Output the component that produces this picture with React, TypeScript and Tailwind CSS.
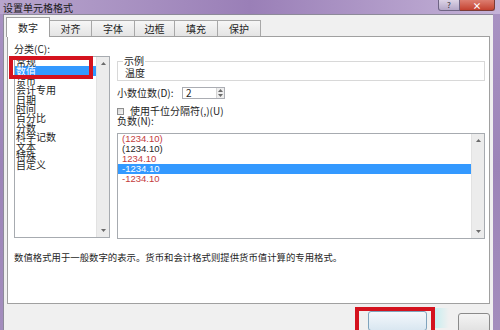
import React from 'react';

const TABS = [
  { label: '数字', w: 'w-[44px]' },
  { label: '对齐', w: 'w-[42px]' },
  { label: '字体', w: 'w-[43px]' },
  { label: '边框', w: 'w-[40px]' },
  { label: '填充', w: 'w-[43px]' },
  { label: '保护', w: 'w-[43px]' },
];

const CATEGORIES = ['常规', '数值', '货币', '会计专用', '日期', '时间', '百分比', '分数', '科学记数', '文本', '特殊', '自定义'];

const NEGATIVES = [
  { text: '(1234.10)', cls: 'text-[#c43c3c]' },
  { text: '(1234.10)', cls: 'text-[#1e1e1e]' },
  { text: '1234.10', cls: 'text-[#c43c3c]' },
  { text: '-1234.10', cls: 'text-white bg-[#3399ff]' },
  { text: '-1234.10', cls: 'text-[#c43c3c]' },
];

const Arrow = ({ down }: { down?: boolean }) => (
  <svg width="5" height="3" viewBox="0 0 5 3">
    <path d={down ? 'M0 0 L5 0 L2.5 3 Z' : 'M0 3 L5 3 L2.5 0 Z'} fill="#6b6b6b" />
  </svg>
);

const ScrollBar = () => (
  <div className="w-[13px] bg-[#ececec] border-l border-[#e2e2e2] flex flex-col justify-between items-center py-[5px]">
    <Arrow />
    <Arrow down />
  </div>
);

export default function App() {
  return (
    <div className="w-[500px] h-[330px] overflow-hidden flex flex-col bg-gradient-to-b from-[#a993c3] via-[#9c84b8] to-[#a38dbd] font-['Noto_Sans_CJK_SC',sans-serif] text-[10px] text-[#1e1e1e]">
      {/* title bar */}
      <div className="h-[18px] flex items-start justify-between bg-gradient-to-r from-[#b8a5cd] via-[#9a7fb7] to-[#c5b3d8]">
        <span className="pl-[3px] pt-[2px] leading-[12px] text-[#1a1a1a]">设置单元格格式</span>
        <div className="flex pr-[5px]">
          <div className="w-[22px] h-[11px] border border-t-0 border-[#6f6484] rounded-bl-[3px] bg-gradient-to-b from-[#ddd4e6] to-[#b4a7c7] flex items-center justify-center text-[8px] leading-none text-[#333]">?</div>
          <div className="w-[35px] h-[11px] border border-t-0 border-l-0 border-[#7a3b36] rounded-br-[3px] bg-gradient-to-b from-[#dc7d70] to-[#c3402f] flex items-center justify-center text-[9px] leading-none font-bold text-white">×</div>
        </div>
      </div>

      {/* dialog body */}
      <div className="ml-[3px] w-[490px] flex-1 bg-[#f0f0f0] border-l border-t border-[#8d8a99] flex flex-col pt-[2px]">
        <div className="relative z-10 flex items-start h-[19px] pl-[2px]">
          {TABS.map((t, i) =>
            i === 0 ? (
              <div key={t.label} className={`${t.w} h-[20px] bg-white border border-b-0 border-[#a0a0a0] flex items-center justify-center leading-none`}>
                {t.label}
              </div>
            ) : (
              <div key={t.label} className={`${t.w} mt-[3px] h-[16px] border border-l-0 border-b-0 border-[#a8a8a8] bg-gradient-to-b from-[#f6f6f6] to-[#e4e4e4] flex items-center justify-center leading-none`}>
                {t.label}
              </div>
            )
          )}
        </div>

        <div className="ml-[3px] w-[483px] h-[268px] bg-white border border-[#a0a0a0] flex flex-col pt-[4px] pl-[6px]">
          <div className="flex">
            {/* category list */}
            <div className="relative w-[96px]">
              <div className="h-[15px] leading-[15px]">分类(C):</div>
              <div className="h-[182px] border border-[#a7abb0] flex">
                <div className="flex-1 overflow-hidden">
                  {CATEGORIES.map((c, i) => (
                    <div key={c} className={`h-[9.4px] leading-[9.4px] pl-[1px] whitespace-nowrap ${i === 1 ? 'bg-[#3399ff] text-white' : ''}`}>
                      {c}
                    </div>
                  ))}
                </div>
                <ScrollBar />
              </div>
              <div className="absolute left-[-5px] top-[15px] w-[84px] h-[23px] border-[4px] border-[#d4121e]" />
            </div>

            {/* right side */}
            <div className="ml-[7px] w-[368px]">
              <fieldset className="mt-[15px] border border-[#d8d8d8] pl-[5px]">
                <legend className="px-[1px] leading-[10px]">示例</legend>
                <div className="h-[14px] leading-[14px] pl-[2px]">温度</div>
              </fieldset>

              <div className="mt-[6px] flex items-center h-[12px]">
                <span className="w-[65px] leading-[12px]">小数位数(D):</span>
                <div className="w-[43px] h-[12px] border border-[#abadb3] bg-white flex">
                  <span className="flex-1 pl-[3px] leading-[10px]">2</span>
                  <div className="w-[8px] border-l border-[#d4d4d4] bg-[#eeeeee] flex flex-col justify-around items-center">
                    <Arrow />
                    <Arrow down />
                  </div>
                </div>
              </div>

              <div className="mt-[7px] flex items-center h-[10px]">
                <div className="w-[7px] h-[7px] border border-[#8f8f8f] bg-gradient-to-br from-[#d6d6d6] to-[#f7f7f7]" />
                <span className="ml-[6px] leading-[10px]">使用千位分隔符(,)(U)</span>
              </div>

              <div className="h-[10px] leading-[10px]">负数(N):</div>

              <div className="mt-[7px] h-[106px] border border-[#a7abb0] flex">
                <div className="flex-1">
                  {NEGATIVES.map((n, i) => (
                    <div key={i} className={`h-[10px] leading-[10px] pl-[4px] font-['Liberation_Sans',sans-serif] text-[9.5px] ${n.cls}`}>
                      {n.text}
                    </div>
                  ))}
                </div>
                <ScrollBar />
              </div>
            </div>
          </div>

          <div className="mt-[12px] leading-[12px] text-[9.4px] whitespace-nowrap">
            数值格式用于一般数字的表示。货币和会计格式则提供货币值计算的专用格式。
          </div>
        </div>

        {/* buttons */}
        <div className="relative flex-1 flex items-start">
          <div className="ml-[364px] mt-[7px] w-[59px] h-[20px] border border-[#7fa3bd] rounded-[3px] bg-gradient-to-b from-[#f4f8fb] to-[#d9e7f1]" />
          <div className="ml-[31px] mt-[9px] w-[32px] h-[20px] border border-[#8a8a8a] rounded-[3px] bg-gradient-to-b from-[#f4f4f4] to-[#e0e0e0]" />
          <div className="absolute left-[351px] top-[3px] w-[80px] h-[30px] border-[4px] border-[#d4121e]" />
          <div className="absolute left-[431px] top-[4px] w-[14px] h-[20px] bg-gradient-to-r from-[#c8eef0] to-transparent" />
        </div>
      </div>
    </div>
  );
}
